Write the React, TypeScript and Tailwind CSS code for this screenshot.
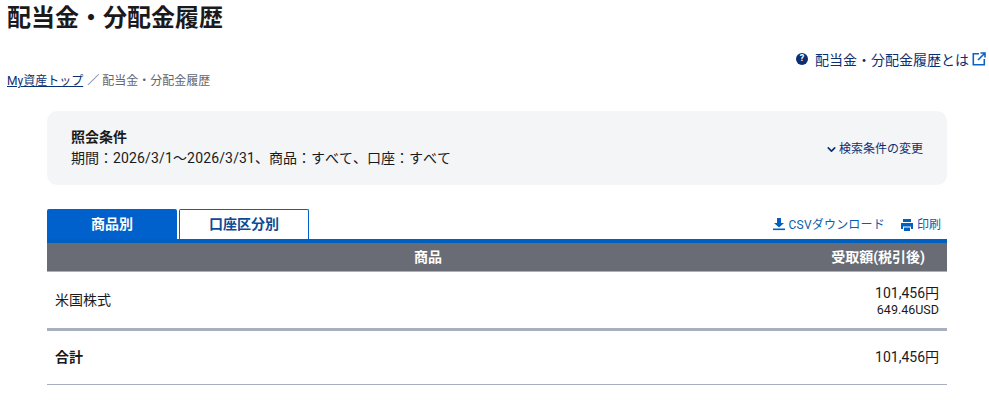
import { ChevronDown } from "lucide-react"

const font = "font-['Roboto','Noto_Sans_CJK_JP',sans-serif]"

function HelpIcon() {
  return (
    <span className="flex items-center justify-center w-[12px] h-[12px] rounded-full bg-[#0b2f73] text-white text-[9px] font-bold leading-none mr-[7px] mb-[3px]">?</span>
  )
}

function ExternalIcon() {
  return (
    <svg viewBox="0 0 14 14" className="w-[14px] h-[14px] ml-[3px] mb-[2px]" fill="none" stroke="#0a62c9" strokeWidth="1.6">
      <path d="M7 1.8H1.3v11h11V7" />
      <path d="M8.5 1H13v4.5M13 1L6 8" />
    </svg>
  )
}

function DownloadIcon() {
  return (
    <svg viewBox="0 0 14 14" className="w-[14px] h-[14px] mr-[3px] mb-[2px]" fill="#0060bf">
      <path d="M5 1h4v5h3L7 10.5 2 6h3z" />
      <rect x="1" y="11.5" width="12" height="1.6" />
    </svg>
  )
}

function PrinterIcon() {
  return (
    <svg viewBox="0 0 14 14" className="w-[14px] h-[14px] ml-[15px] mr-[3px]" fill="#0060bf">
      <path d="M3 1h8v3H3z" />
      <path d="M1 5h12v6h-2V8.5H3V11H1z" />
      <path d="M4 9.5h6V13H4z" />
    </svg>
  )
}

export default function App() {
  return (
    <div className={`${font} w-[989px] h-[403px] overflow-hidden bg-white text-[#1a1a1c]`}>
      <h1 className="pl-[7px] text-[24px] leading-[36px] font-bold">配当金・分配金履歴</h1>

      <div className="flex justify-end pr-[3px] mt-[14px] h-[20px] items-center text-[#0b2f73] text-[14px]">
        <HelpIcon />
        <span>配当金・分配金履歴とは</span>
        <ExternalIcon />
      </div>

      <div className="pl-[7px] mt-[2px] h-[18px] flex items-center text-[12px] text-[#62656d]">
        <a href="#" className="text-[#0b2f73] underline">My資産トップ</a>
        <span className="ml-[4px] mr-[3px]">／</span>
        <span>配当金・分配金履歴</span>
      </div>

      <div className="mx-[47px] w-[900px] mt-[21px]">
        <div className="h-[74px] rounded-[10px] bg-[#f3f5f7] pl-[24px] pr-[24px] flex items-center justify-between">
          <div className="text-[14px] leading-[21px]">
            <div className="font-bold">照会条件</div>
            <div className="[font-kerning:none]">期間：<span className="tracking-[0.15px]">2026/3/1～2026/3/31</span>、商品：すべて、口座：すべて</div>
          </div>
          <div className="flex items-center text-[12px] text-[#0b2f73] pt-[2px]">
            <ChevronDown className="w-[13px] h-[13px] mr-px -ml-[1px]" strokeWidth={3} />
            <span>検索条件の変更</span>
          </div>
        </div>

        <div className="mt-[24px] flex items-end justify-between h-[30px]">
          <div className="flex gap-[2px] text-[14px] font-bold h-full">
            <div className="w-[130px] flex items-center justify-center bg-[#0060cc] text-white rounded-t-[2px]">商品別</div>
            <div className="w-[130px] flex items-center justify-center bg-white text-[#0b4a94] border border-b-0 border-[#0060cc] rounded-t-[2px]">口座区分別</div>
          </div>
          <div className="flex items-center text-[12px] text-[#0b5cad] h-full pr-[6px] pt-[1px]">
            <DownloadIcon />
            <span className="tracking-[0.2px]">CSVダウンロード</span>
            <PrinterIcon />
            <span>印刷</span>
          </div>
        </div>

        <div className="h-[4px] bg-[#0060bf]" />
        <div className="h-[29px] bg-[#696c75] border-b border-[#a9afbf] flex items-center text-white font-bold text-[14px]">
          <div className="flex-1 text-center">商品</div>
          <div className="w-[138px] pr-[22px] text-right">受取額(税引後)</div>
        </div>

        <div className="h-[59px] border-b-[3px] border-[#a9afbf] flex items-center justify-between pl-[8px] pr-[8px] text-[14px]">
          <div>米国株式</div>
          <div className="text-right">
            <div className="leading-[20px]">101,456円</div>
            <div className="text-[12.5px] leading-[14px]">649.46USD</div>
          </div>
        </div>

        <div className="h-[54px] border-b border-[#a9afbf] flex items-center justify-between pl-[8px] pr-[8px] text-[14px]">
          <div className="font-bold">合計</div>
          <div>101,456円</div>
        </div>
      </div>
    </div>
  )
}
